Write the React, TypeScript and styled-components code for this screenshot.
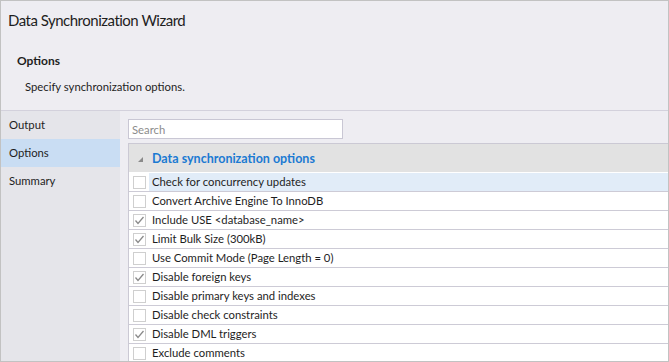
import styled, { createGlobalStyle } from "styled-components";

const GlobalStyle = createGlobalStyle`
  body {
    margin: 0;
    font-family: Lato, "Noto Sans", Arial, sans-serif;
    font-size: 11.3px;
    color: #1e1e1e;
  }
`;

interface Option {
  label: string;
  checked: boolean;
}

const options: Option[] = [
  { label: "Check for concurrency updates", checked: false },
  { label: "Convert Archive Engine To InnoDB", checked: false },
  { label: "Include USE <database_name>", checked: true },
  { label: "Limit Bulk Size (300kB)", checked: true },
  { label: "Use Commit Mode (Page Length = 0)", checked: false },
  { label: "Disable foreign keys", checked: true },
  { label: "Disable primary keys and indexes", checked: false },
  { label: "Disable check constraints", checked: false },
  { label: "Disable DML triggers", checked: true },
  { label: "Exclude comments", checked: false },
];

const steps = ["Output", "Options", "Summary"];

export default function App() {
  return (
    <>
      <GlobalStyle />
      <Window>
        <Header>
          <Title>Data Synchronization Wizard</Title>
          <StepTitle>Options</StepTitle>
          <StepHint>Specify synchronization options.</StepHint>
        </Header>
        <Body>
          <Sidebar>
            {steps.map((s) => (
              <NavItem key={s} $active={s === "Options"}>
                {s}
              </NavItem>
            ))}
          </Sidebar>
          <Content>
            <SearchBox placeholder="Search" />
            <Grid>
              <GroupRow>
                <Arrow />
                <GroupTitle>Data synchronization options</GroupTitle>
              </GroupRow>
              {options.map((o, i) => (
                <Row key={o.label}>
                  <CheckCell>
                    <Box>
                      {o.checked && (
                        <svg width="11" height="11" viewBox="0 0 11 11">
                          <path d="M1.5 5.5 L4 8.5 L9.5 2" fill="none" stroke="#8a8a8a" strokeWidth="1.3" />
                        </svg>
                      )}
                    </Box>
                  </CheckCell>
                  <LabelCell $focused={i === 0}>{o.label}</LabelCell>
                </Row>
              ))}
            </Grid>
          </Content>
        </Body>
      </Window>
    </>
  );
}

const Window = styled.div`
  width: 669px;
  height: 362px;
  box-sizing: border-box;
  border: 1px solid #c2c2c2;
  display: flex;
  flex-direction: column;
  overflow: hidden;
  background: #eeedf2;
`;

const Header = styled.div`
  height: 110px;
  box-sizing: border-box;
  border-bottom: 1px solid #d3d1dc;
  padding: 8px 0 0 7px;
`;

const Title = styled.div`
  font-size: 15px;
  letter-spacing: -0.5px;
  line-height: 22px;
`;

const StepTitle = styled.div`
  font-weight: bold;
  font-size: 12px;
  margin: 22px 0 0 9px;
  line-height: 16px;
`;

const StepHint = styled.div`
  margin: 10px 0 0 17px;
  line-height: 16px;
`;

const Body = styled.div`
  flex: 1;
  display: flex;
  min-height: 0;
`;

const Sidebar = styled.div`
  width: 119px;
  background: #e5e5ea;
  display: flex;
  flex-direction: column;
`;

const NavItem = styled.div<{ $active?: boolean }>`
  height: 28px;
  line-height: 28px;
  padding-left: 8px;
  background: ${(p) => (p.$active ? "#c9ddf3" : "transparent")};
`;

const Content = styled.div`
  flex: 1;
  padding: 8px 0 0 8px;
  display: flex;
  flex-direction: column;
  gap: 4px;
  min-width: 0;
`;

const SearchBox = styled.input`
  width: 215px;
  height: 20px;
  flex-shrink: 0;
  box-sizing: border-box;
  border: 1px solid #c9c7d4;
  background: #fff;
  padding: 0 3px;
  font: inherit;
  outline: none;
  &::placeholder {
    color: #8c8c8c;
  }
`;

const Grid = styled.div`
  flex: 1;
  background: #fff;
  border-left: 1px solid #cbc9d4;
  border-top: 1px solid #cbc9d4;
`;

const GroupRow = styled.div`
  height: 29px;
  display: flex;
  align-items: center;
  background: #e2e2e2;
  border-bottom: 1px solid #fff;
  box-sizing: border-box;
`;

const Arrow = styled.span`
  width: 0;
  height: 0;
  margin: 2px 0 0 9px;
  border-left: 5px solid transparent;
  border-bottom: 5px solid #8a8a8a;
`;

const GroupTitle = styled.span`
  margin-left: 9px;
  color: #1b7ad2;
  font-weight: bold;
  font-size: 12.5px;
`;

const Row = styled.div`
  height: 19px;
  box-sizing: border-box;
  display: flex;
  border-bottom: 1px solid #cdcbd6;
`;

const CheckCell = styled.div`
  width: 20px;
  display: flex;
  align-items: center;
  justify-content: center;
`;

const Box = styled.div`
  width: 13px;
  height: 13px;
  box-sizing: border-box;
  border: 1px solid #cfcfcf;
  background: #fff;
  display: flex;
  align-items: center;
  justify-content: center;
`;

const LabelCell = styled.div<{ $focused?: boolean }>`
  flex: 1;
  padding-left: 3px;
  line-height: 18px;
  background: ${(p) => (p.$focused ? "#e1ecf8" : "transparent")};
  white-space: nowrap;
`;
